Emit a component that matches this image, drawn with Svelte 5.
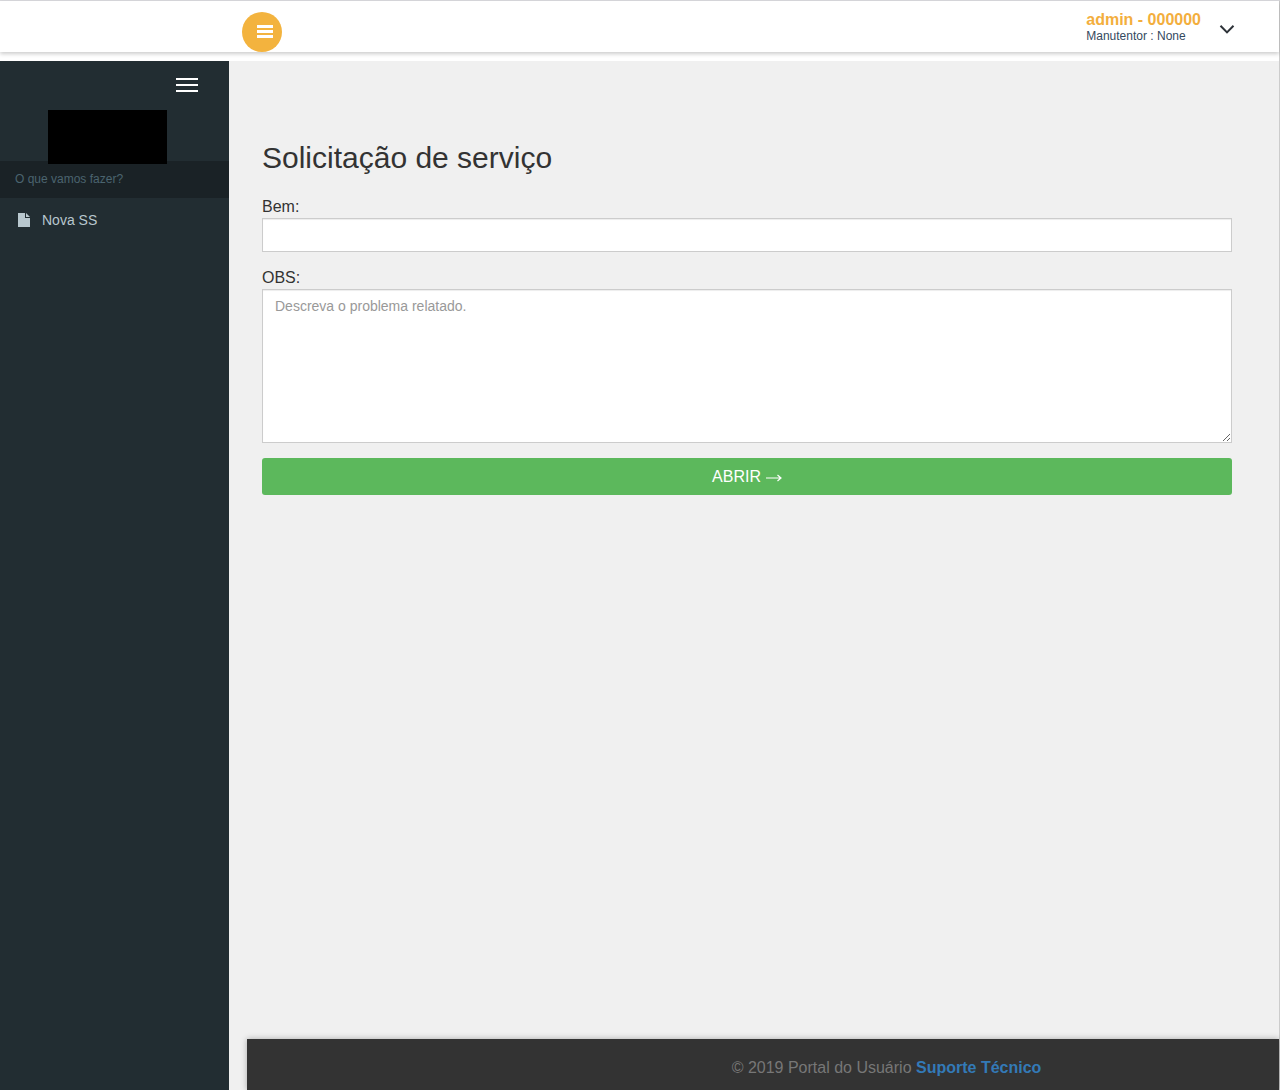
<script>
  let asset = $state('');
  let notes = $state('');
</script>

<div class="app">
  <header class="topbar">
    <button class="toggle" type="button" aria-label="Alternar menu">
      <svg width="16" height="14" viewBox="0 0 16 14" aria-hidden="true">
        <path d="M0 0h16v3H0zM0 5h16v3H0zM0 10h16v3H0z" fill="#fff" />
      </svg>
    </button>
    <button class="user" type="button">
      <span class="identity">
        <strong>admin - 000000</strong>
        <span class="role">Manutentor : None</span>
      </span>
      <svg width="16" height="14" viewBox="0 0 16 14" aria-hidden="true">
        <path d="M1.500 4.700 8 11.400l6.500-6.700" fill="none" stroke="#2d3238" stroke-width="2" />
      </svg>
    </button>
  </header>

  <div class="workspace">
    <aside class="sidebar">
      <button class="collapse" type="button" aria-label="Recolher menu">
        <svg width="22" height="14" viewBox="0 0 22 14" aria-hidden="true">
          <path d="M0 0h22v2H0zM0 6h22v2H0zM0 12h22v2H0z" fill="#fff" />
        </svg>
      </button>
      <div class="logo"></div>
      <nav>
        <p class="section">O que vamos fazer?</p>
        <a class="item" href="#nova">
          <svg width="12" height="14" viewBox="0 0 12 14" aria-hidden="true">
            <path d="M0 0h7v5h5v9H0zM8 0l4 4H8z" fill="#b8c7ce" />
          </svg>
          <span>Nova SS</span>
        </a>
      </nav>
    </aside>

    <div class="page">
      <main>
        <h1>Solicitação de serviço</h1>
        <form onsubmit={(e) => e.preventDefault()}>
          <div class="field">
            <label for="asset">Bem:</label>
            <input id="asset" type="text" bind:value={asset} />
          </div>
          <div class="field">
            <label for="notes">OBS:</label>
            <textarea id="notes" placeholder="Descreva o problema relatado." bind:value={notes}></textarea>
          </div>
          <button class="submit" type="submit">
            <span>ABRIR</span>
            <svg width="16" height="8" viewBox="0 0 16 8" aria-hidden="true">
              <path d="M0 4h15M11.500 1 15 4l-3.500 3" fill="none" stroke="#fff" stroke-width="1.200" />
            </svg>
          </button>
        </form>
      </main>
      <footer>
        <p>© 2019 Portal do Usuário <a href="#suporte">Suporte Técnico</a></p>
      </footer>
    </div>
  </div>
</div>

<style>
  :global(body) {
    margin: 0;
    background: #fff;
    color: #333;
    font-family: "Liberation Sans", Arial, sans-serif;
    font-size: 16px;
  }

  .app,
  .app * {
    box-sizing: border-box;
  }

  .app {
    display: flex;
    flex-direction: column;
    min-height: 100vh;
    border-top: 1px solid #d9d9dd;
    border-right: 1px solid #ccc;
  }

  button {
    padding: 0;
    border: 0;
    background: none;
    color: inherit;
    font: inherit;
    cursor: pointer;
  }

  svg {
    display: block;
    flex: none;
  }

  .topbar {
    display: flex;
    justify-content: space-between;
    align-items: flex-end;
    height: 51px;
    margin-bottom: 9px;
    padding: 0 44px 0 242px;
    box-shadow: 0 2px 4px rgba(0, 0, 0, 0.2);
  }

  .toggle {
    display: flex;
    align-items: center;
    width: 40px;
    height: 40px;
    padding-left: 15px;
    border-radius: 50%;
    background: #f3b33e;
  }

  .user {
    display: flex;
    align-items: center;
    gap: 18px;
    padding-bottom: 8px;
    text-align: left;
  }

  .identity {
    display: flex;
    flex-direction: column;
  }

  .identity strong {
    color: #f3ae3d;
    line-height: 18px;
  }

  .role {
    color: #34495e;
    font-size: 12px;
    line-height: 15px;
  }

  .workspace {
    display: flex;
    flex: 1;
  }

  .sidebar {
    display: flex;
    flex-direction: column;
    flex: none;
    width: 229px;
    padding-top: 17px;
    background: #222d32;
  }

  .collapse {
    align-self: flex-end;
    margin-right: 31px;
  }

  .logo {
    z-index: 1;
    width: 119px;
    height: 54px;
    margin: 18px 0 -3px 48px;
    background: #000;
  }

  .section {
    margin: 0;
    padding: 10px 15px;
    background: #1a2226;
    color: #4b646f;
    font-size: 12px;
    line-height: 17px;
  }

  .item {
    display: flex;
    align-items: center;
    gap: 12px;
    padding: 12px 18px;
    color: #b8c7ce;
    font-size: 14px;
    line-height: 20px;
    text-decoration: none;
  }

  .page {
    display: flex;
    flex: 1;
    flex-direction: column;
    min-width: 0;
    background: #f0f0f0;
  }

  main {
    flex: 1;
    padding: 80px 47px 40px 33px;
  }

  h1 {
    margin: 0 0 22px;
    font-size: 30px;
    font-weight: 400;
    line-height: 33px;
  }

  .field {
    display: flex;
    flex-direction: column;
    margin-bottom: 15px;
  }

  label {
    line-height: 22px;
  }

  input,
  textarea {
    display: block;
    width: 100%;
    height: 34px;
    margin: 0;
    padding: 6px 12px;
    border: 1px solid #ccc;
    border-radius: 0;
    background: #fff;
    box-shadow: inset 0 1px 1px rgba(0, 0, 0, 0.075);
    color: #555;
    font-family: inherit;
    font-size: 14px;
    line-height: 20px;
  }

  textarea {
    height: 154px;
    resize: vertical;
  }

  textarea::placeholder {
    color: #999;
  }

  .submit {
    display: flex;
    justify-content: center;
    align-items: center;
    gap: 5px;
    width: 100%;
    height: 37px;
    border-radius: 3px;
    background: #5cb85c;
    color: #fff;
  }

  .submit svg {
    margin-top: 3px;
  }

  footer {
    margin-left: 18px;
    padding: 18px 0 11px 247px;
    background: #333;
    box-shadow: 0 0 6px rgba(0, 0, 0, 0.3);
    color: #777;
    text-align: center;
  }

  footer p {
    margin: 0;
    line-height: 22px;
  }

  footer a {
    color: #337ab7;
    font-weight: 700;
    text-decoration: none;
  }
</style>
